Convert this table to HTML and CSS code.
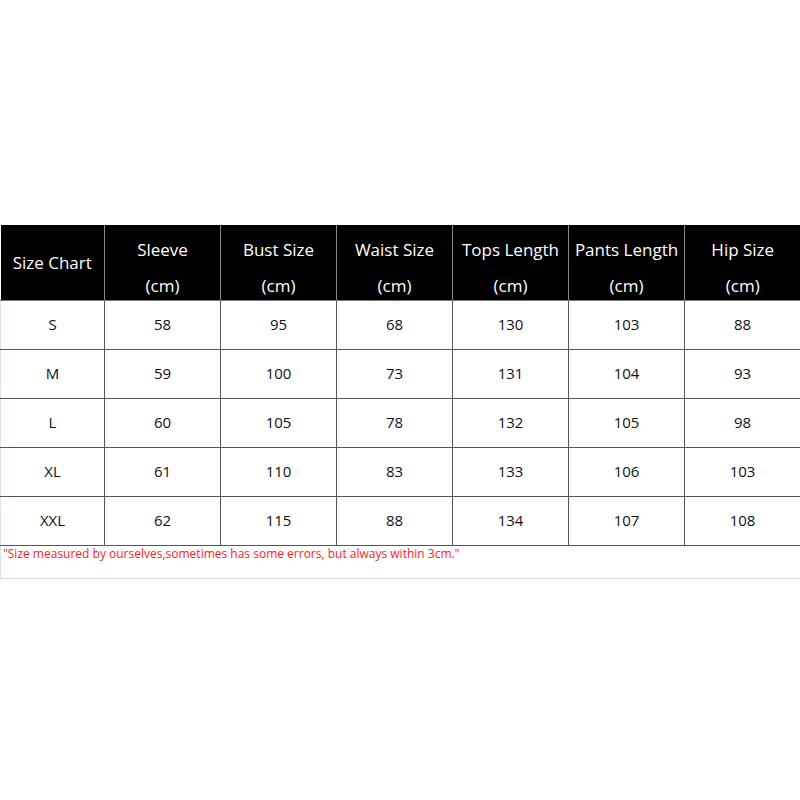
FILE: index.html
```html
<!DOCTYPE html>
<html>
<head>
<meta charset="utf-8">
<link rel="stylesheet" href="styles.css">
</head>
<body>
<div class="page">
  <table class="chart">
    <colgroup>
      <col class="c-first">
      <col class="c-col"><col class="c-col"><col class="c-col"><col class="c-col"><col class="c-col"><col class="c-col">
    </colgroup>
    <thead>
      <tr>
        <th>Size Chart</th>
        <th><div class="two">Sleeve<br>(cm)</div></th>
        <th><div class="two">Bust Size<br>(cm)</div></th>
        <th><div class="two">Waist Size<br>(cm)</div></th>
        <th><div class="two">Tops Length<br>(cm)</div></th>
        <th><div class="two">Pants Length<br>(cm)</div></th>
        <th><div class="two">Hip Size<br>(cm)</div></th>
      </tr>
    </thead>
    <tbody>
      <tr><td>S</td><td>58</td><td>95</td><td>68</td><td>130</td><td>103</td><td>88</td></tr>
      <tr><td>M</td><td>59</td><td>100</td><td>73</td><td>131</td><td>104</td><td>93</td></tr>
      <tr><td>L</td><td>60</td><td>105</td><td>78</td><td>132</td><td>105</td><td>98</td></tr>
      <tr><td>XL</td><td>61</td><td>110</td><td>83</td><td>133</td><td>106</td><td>103</td></tr>
      <tr><td>XXL</td><td>62</td><td>115</td><td>88</td><td>134</td><td>107</td><td>108</td></tr>
      <tr class="note-row"><td colspan="7">"Size measured by ourselves,sometimes has some errors, but always within 3cm."</td></tr>
    </tbody>
  </table>
</div>
</body>
</html>
```

FILE: styles.css
```css
html, body {
  margin: 0;
  padding: 0;
  background: #fff;
}
.page {
  padding-top: 225px;
  font-family: "Open Sans", "Noto Sans", sans-serif;
}
.chart {
  border-collapse: collapse;
  width: 798px;
  table-layout: fixed;
}
.c-first { width: 104px; }
.c-col { width: 116px; }
.chart th {
  background: #000;
  color: #fff;
  font-weight: normal;
  font-size: 17px;
  line-height: 37px;
  height: 75px;
  padding: 0;
  text-align: center;
  vertical-align: middle;
  border-left: 1px solid #8a8a8a;
  border-bottom: 1px solid #777;
  white-space: nowrap;
}
.chart th:first-child { border-left: none; }
.chart th .two {
  height: 68px;
  padding-top: 7px;
  line-height: 36px;
  overflow: visible;
}
.chart td {
  color: #111;
  font-size: 15px;
  height: 45px;
  padding: 0 0 3px 0;
  text-align: center;
  vertical-align: middle;
  border: 1px solid #555;
}
.chart td:first-child { border-left: 1px solid #dce3ec; }
.chart tr td:last-child { border-right: 1px solid #d8d8d8; }
.chart .note-row td {
  height: 32px;
  text-align: left;
  vertical-align: top;
  color: #ff2020;
  font-size: 12px;
  line-height: 16px;
  padding: 0 0 0 2px;
  border-top: 1px solid #555;
  border-bottom: 1px solid #dadada;
  border-left: 1px solid #dce3ec;
  border-right: 1px solid #d8d8d8;
}
```
